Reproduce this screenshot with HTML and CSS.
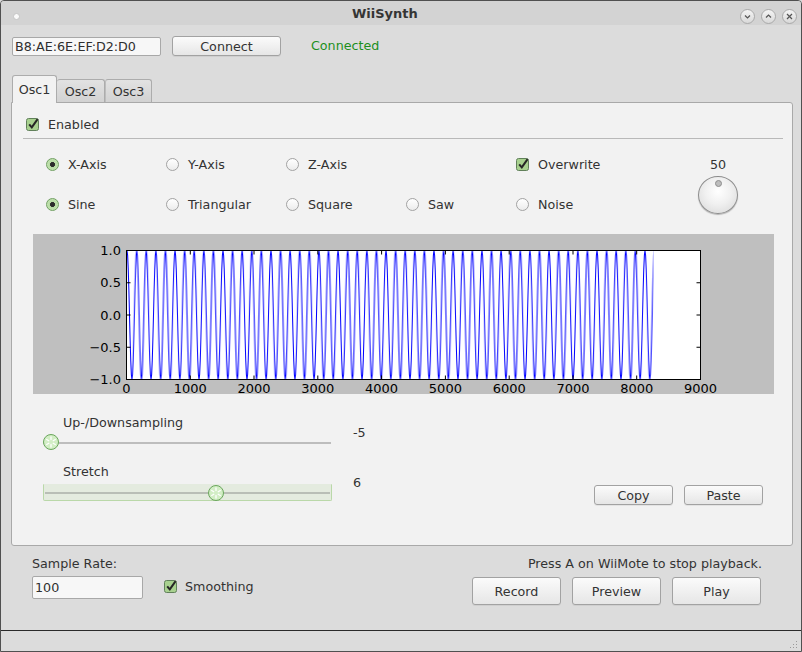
FILE: index.html
```html
<!DOCTYPE html>
<html>
<head>
<meta charset="utf-8">
<title>WiiSynth</title>
<link rel="stylesheet" href="styles.css">
</head>
<body>
<div class="window">
  <div class="titlebar">
    <span class="tb-dot"></span>
    <span class="tb-title">WiiSynth</span>
    <div class="tb-buttons">
      <span class="tb-btn"><svg width="15" height="15" viewBox="0 0 15 15"><polyline points="5,6.5 7.5,9 10,6.5" fill="none" stroke="#555" stroke-width="1.2"/></svg></span>
      <span class="tb-btn"><svg width="15" height="15" viewBox="0 0 15 15"><polyline points="5,8.5 7.5,6 10,8.5" fill="none" stroke="#555" stroke-width="1.2"/></svg></span>
      <span class="tb-btn"><svg width="15" height="15" viewBox="0 0 15 15"><path d="M5 5 L10 10 M10 5 L5 10" fill="none" stroke="#555" stroke-width="1.2"/></svg></span>
    </div>
  </div>

  <div class="main">
    <div class="conn-row">
      <div class="field mac">B8:AE:6E:EF:D2:D0</div>
      <div class="btn connect">Connect</div>
      <div class="status">Connected</div>
    </div>

    <div class="tabs">
      <div class="tab active">Osc1</div>
      <div class="tab osc2">Osc2</div>
      <div class="tab osc3">Osc3</div>
    </div>

    <div class="pane">
      <div class="enabled-row">
        <span class="cb"><svg width="14" height="14" viewBox="0 0 14 14"><rect x="0.5" y="1.5" width="12" height="12" rx="2" fill="#a8d18f" stroke="#61805a"/><path d="M3.2 7.4 L5.8 10.4 L11.6 2.2" fill="none" stroke="#262626" stroke-width="2"/></svg></span>
        <span>Enabled</span>
      </div>
      <div class="sep"></div>

      <div class="options">
        <div class="opt"><span class="radio on"></span>X-Axis</div>
        <div class="opt"><span class="radio"></span>Y-Axis</div>
        <div class="opt"><span class="radio"></span>Z-Axis</div>
        <div class="opt"></div>
        <div class="opt"><span class="cb"><svg width="14" height="14" viewBox="0 0 14 14"><rect x="0.5" y="1.5" width="12" height="12" rx="2" fill="#a8d18f" stroke="#61805a"/><path d="M3.2 7.4 L5.8 10.4 L11.6 2.2" fill="none" stroke="#262626" stroke-width="2"/></svg></span>Overwrite</div>
        <div class="knob-cell">
          <span class="knob-val">50</span>
          <span class="knob"><span class="knob-dot"></span></span>
        </div>
        <div class="opt"><span class="radio on"></span>Sine</div>
        <div class="opt"><span class="radio"></span>Triangular</div>
        <div class="opt"><span class="radio"></span>Square</div>
        <div class="opt"><span class="radio"></span>Saw</div>
        <div class="opt"><span class="radio"></span>Noise</div>
      </div>

      <div class="plot">
        <svg width="741" height="166" viewBox="0 0 741 166">
          <defs>
            <pattern id="wave" patternUnits="userSpaceOnUse" x="89.3" y="0" width="9.59" height="160">
              <polyline fill="none" stroke="#0000ff" stroke-width="1"
                points="-0.599,140.59 0,145.5 0.599,140.59 1.199,126.61 1.798,105.68 2.398,81 2.997,56.32 3.596,35.39 4.196,21.41 4.795,16.5 5.394,21.41 5.994,35.39 6.593,56.32 7.193,81 7.792,105.68 8.391,126.61 8.991,140.59 9.59,145.5 10.19,140.59"/>
            </pattern>
          </defs>
          <rect x="0" y="0" width="741" height="160" fill="#bfbfbf"/>
          <rect x="93.5" y="16.5" width="574" height="129" fill="#ffffff"/>
          <rect x="93.5" y="16" width="527" height="130" fill="url(#wave)"/>
          <g stroke="#000" stroke-width="1">
            <path d="M93.5 16.5 h4 M93.5 48.75 h4 M93.5 81 h4 M93.5 113.25 h4 M93.5 145.5 h4"/>
            <path d="M667.5 16.5 h-4 M667.5 48.75 h-4 M667.5 81 h-4 M667.5 113.25 h-4 M667.5 145.5 h-4"/>
            <path d="M157.3 145.5 v-4 M221 145.5 v-4 M284.8 145.5 v-4 M348.6 145.5 v-4 M412.4 145.5 v-4 M476.2 145.5 v-4 M540 145.5 v-4 M603.7 145.5 v-4"/>
            <path d="M157.3 16.5 v4 M221 16.5 v4 M284.8 16.5 v4 M348.6 16.5 v4 M412.4 16.5 v4 M476.2 16.5 v4 M540 16.5 v4 M603.7 16.5 v4"/>
          </g>
          <rect x="93.5" y="16.5" width="574" height="129" fill="none" stroke="#000" stroke-width="1"/>
          <g class="ax" text-anchor="end">
            <text x="88" y="21">1.0</text>
            <text x="88" y="53">0.5</text>
            <text x="88" y="85.5">0.0</text>
            <text x="88" y="117.5">−0.5</text>
            <text x="88" y="150">−1.0</text>
          </g>
          <g class="ax" text-anchor="middle">
            <text x="93.5" y="159">0</text>
            <text x="157.3" y="159">1000</text>
            <text x="221" y="159">2000</text>
            <text x="284.8" y="159">3000</text>
            <text x="348.6" y="159">4000</text>
            <text x="412.4" y="159">5000</text>
            <text x="476.2" y="159">6000</text>
            <text x="540" y="159">7000</text>
            <text x="603.7" y="159">8000</text>
            <text x="667.5" y="159">9000</text>
          </g>
        </svg>
      </div>

      <div class="controls">
        <div class="sliders">
          <div class="sblock">
            <div class="sstack">
              <div class="slabel">Up-/Downsampling</div>
              <div class="track">
                <span class="groove"></span>
                <span class="handle" style="left:0px"><svg width="16" height="16" viewBox="0 0 16 16"><circle cx="8" cy="8" r="7.5" fill="#d2eec5" stroke="#6aa65c"/><g stroke="#fff" stroke-width="1.3" stroke-linecap="round"><path d="M8 3 V5.5 M8 10.5 V13 M3.7 5.5 L5.8 6.7 M10.2 9.3 L12.3 10.5 M3.7 10.5 L5.8 9.3 M10.2 6.7 L12.3 5.5"/></g></svg></span>
              </div>
            </div>
            <div class="sval">-5</div>
          </div>
          <div class="sblock second">
            <div class="sstack">
              <div class="slabel">Stretch</div>
              <div class="track focus">
                <span class="groove"></span>
                <span class="handle" style="left:164px"><svg width="16" height="16" viewBox="0 0 16 16"><circle cx="8" cy="8" r="7.5" fill="#d2eec5" stroke="#6aa65c"/><g stroke="#fff" stroke-width="1.3" stroke-linecap="round"><path d="M8 3 V5.5 M8 10.5 V13 M3.7 5.5 L5.8 6.7 M10.2 9.3 L12.3 10.5 M3.7 10.5 L5.8 9.3 M10.2 6.7 L12.3 5.5"/></g></svg></span>
              </div>
            </div>
            <div class="sval">6</div>
          </div>
        </div>
        <div class="copy-paste">
          <div class="btn small">Copy</div>
          <div class="btn small">Paste</div>
        </div>
      </div>
    </div>

    <div class="bottom">
      <div class="b-label">Sample Rate:</div>
      <div class="b-hint">Press A on WiiMote to stop playback.</div>
      <div class="b-left">
        <div class="field rate">100</div>
        <span class="cb"><svg width="14" height="14" viewBox="0 0 14 14"><rect x="0.5" y="1.5" width="12" height="12" rx="2" fill="#a8d18f" stroke="#61805a"/><path d="M3.2 7.4 L5.8 10.4 L11.6 2.2" fill="none" stroke="#262626" stroke-width="2"/></svg></span>
        <span>Smoothing</span>
      </div>
      <div class="b-buttons">
        <div class="btn big">Record</div>
        <div class="btn big">Preview</div>
        <div class="btn big">Play</div>
      </div>
    </div>
  </div>

  <div class="statusbar">
    <svg class="grip" width="9" height="9" viewBox="0 0 9 9" fill="#9a9a9a"><rect x="7" y="1" width="1" height="1"/><rect x="4" y="4" width="1" height="1"/><rect x="7" y="4" width="1" height="1"/><rect x="1" y="7" width="1" height="1"/><rect x="4" y="7" width="1" height="1"/><rect x="7" y="7" width="1" height="1"/></svg>
  </div>
</div>
</body>
</html>
```

FILE: styles.css
```css
* { box-sizing: border-box; }

html, body {
  margin: 0;
  padding: 0;
  background: #dcdcdc;
}

body {
  font-family: "DejaVu Sans", sans-serif;
  font-size: 12.7px;
  color: #333333;
}

.window {
  width: 802px;
  height: 652px;
  border: 1px solid #505050;
  border-radius: 4px 4px 0 0;
  background: #dcdcdc;
  display: flex;
  flex-direction: column;
  overflow: hidden;
}

/* title bar */
.titlebar {
  height: 24px;
  flex: none;
  background: #d3d3d3;
  display: flex;
  align-items: center;
}

.tb-dot {
  width: 7px;
  height: 7px;
  border-radius: 50%;
  background: #fafafa;
  border: 1px solid #c4c4c4;
  margin-left: 12px;
  margin-top: 6px;
}

.tb-title {
  font-weight: bold;
  font-size: 13px;
  color: #353535;
  margin-left: 332px;
  padding-top: 2px;
  line-height: 22px;
}

.tb-buttons {
  margin-left: auto;
  margin-right: 4px;
  margin-top: 6px;
  display: flex;
  gap: 6px;
}

.tb-btn {
  width: 15px;
  height: 15px;
  border-radius: 50%;
  border: 1px solid #a9a9a9;
  background: linear-gradient(#f4f4f4, #d9d9d9);
  display: flex;
  align-items: center;
  justify-content: center;
  overflow: hidden;
}

.tb-btn svg { flex: none; margin: -1px; }

/* main */
.main {
  flex: 1;
  padding: 0 8px 0 10px;
  display: flex;
  flex-direction: column;
}

.conn-row {
  margin-top: 11px;
  margin-left: 1px;
  height: 20px;
  display: flex;
  align-items: flex-end;
}

.field {
  background: #f7f7f7;
  border: 1px solid #a8a8a8;
  border-radius: 2px;
  padding-left: 2px;
  color: #2e2e2e;
  display: flex;
  align-items: center;
}

.mac {
  width: 149px;
  height: 19px;
}

.btn {
  border: 1px solid #a2a2a2;
  border-radius: 3px;
  background: linear-gradient(#fbfbfb, #e6e6e6);
  display: flex;
  align-items: center;
  justify-content: center;
  color: #333;
  box-shadow: 0 1px 0 rgba(0,0,0,0.06);
}

.connect {
  width: 109px;
  height: 20px;
  margin-left: 11px;
}

.status {
  margin-left: 30px;
  color: #1d8f1d;
  align-self: center;
  margin-top: -2px;
}

/* tabs */
.tabs {
  margin-top: 19px;
  margin-left: 1px;
  height: 27px;
  display: flex;
  align-items: flex-end;
}

.tab {
  height: 23px;
  border: 1px solid #acacac;
  border-bottom: none;
  border-radius: 3px 3px 0 0;
  background: linear-gradient(#e2e2e2, #d2d2d2);
  display: flex;
  align-items: center;
  justify-content: center;
  padding-top: 1px;
}

.tab.active {
  width: 45px;
  height: 28px;
  margin-bottom: -1px;
  background: #f2f2f2;
  position: relative;
  z-index: 1;
  padding-top: 0;
}

.osc2 { width: 48px; border-left: none; }
.osc3 { width: 47px; border-left: 1px solid #bdbdbd; }

.pane {
  width: 782px;
  height: 444px;
  flex: none;
  border: 1px solid #a9a9a9;
  border-radius: 0 3px 3px 3px;
  background: #f2f2f2;
  display: flex;
  flex-direction: column;
}

.enabled-row {
  margin-top: 14px;
  padding-left: 14px;
  height: 14px;
  display: flex;
  align-items: center;
}

.cb {
  width: 14px;
  height: 14px;
  flex: none;
  margin-right: 8px;
  display: flex;
  margin-top: -1px;
}

.sep {
  margin: 7px 9px 0 11px;
  border-top: 1px solid #b9b9b9;
}

.options {
  margin-top: 15px;
  padding-left: 34px;
  display: grid;
  grid-template-columns: 120px 120px 120px 110px 172px 60px;
  grid-template-rows: 20px 20px;
  row-gap: 20px;
}

.opt {
  display: flex;
  align-items: center;
  height: 20px;
}

.radio {
  width: 13px;
  height: 13px;
  flex: none;
  border-radius: 50%;
  border: 1px solid #a3a3a3;
  background: linear-gradient(#ffffff, #ececec);
  margin-right: 9px;
}

.radio.on {
  border-color: #71a062;
  background: radial-gradient(circle, #2c2c2c 0, #2c2c2c 2.2px, #b7dba3 2.8px, #c9e7b9 100%);
}

.knob-cell {
  grid-column: 6;
  grid-row: 1 / span 2;
  display: flex;
  flex-direction: column;
  align-items: center;
}

.knob-val {
  line-height: 20px;
  height: 20px;
  padding-top: 1px;
}

.knob {
  margin-top: 2px;
  width: 40px;
  height: 40px;
  border-radius: 50%;
  border: 1px solid #8c8c8c;
  background: radial-gradient(circle at 50% 40%, #ffffff 0, #f0f0f0 45%, #d6d6d6 100%);
  box-shadow: 0 1px 1px rgba(0,0,0,0.25);
  position: relative;
}

.knob-dot {
  position: absolute;
  left: 16px;
  top: 3px;
  width: 7px;
  height: 7px;
  border-radius: 50%;
  background: #bdbdbd;
  border: 1px solid #8e8e8e;
}

.plot {
  margin: 20px 0 0 21px;
  width: 741px;
  height: 160px;
  flex: none;
}

.plot svg { display: block; overflow: visible; }

.ax {
  font-family: "DejaVu Sans", sans-serif;
  font-size: 13px;
  fill: #000;
}

/* sliders */
.controls {
  margin-top: 21px;
  padding-left: 31px;
  display: flex;
}

.sliders {
  display: flex;
  flex-direction: column;
  gap: 14px;
}

.sblock {
  display: flex;
  align-items: center;
}

.sstack {
  width: 289px;
  display: flex;
  flex-direction: column;
  gap: 3px;
}

.sblock.second .sstack { gap: 4px; }

.slabel {
  padding-left: 20px;
  line-height: 16px;
  height: 16px;
}

.sval {
  margin-left: 21px;
}

.track {
  height: 16px;
  position: relative;
}

.groove {
  display: block;
  position: absolute;
  left: 0;
  right: 1px;
  top: 8px;
  height: 2px;
  background: #bdbdbd;
}

.track.focus {
  height: 17px;
  background: #e4ebdf;
  border: 1px solid #bad8a9;
  border-top-color: #e4ebdf;
  border-radius: 0 0 2px 2px;
}

.track.focus .groove {
  left: 1px;
  right: 1px;
  top: 7px;
  background: #b9beb6;
}

.handle {
  position: absolute;
  top: 0;
  width: 16px;
  height: 16px;
  display: block;
}

.handle svg { display: block; }

.copy-paste {
  margin-left: auto;
  margin-right: 29px;
  align-self: flex-end;
  margin-bottom: -4px;
  display: flex;
  gap: 11px;
}

.btn.small {
  width: 79px;
  height: 20px;
}

/* bottom area */
.bottom {
  margin-top: 10px;
  padding: 0 31px 0 21px;
  display: grid;
  grid-template-columns: 1fr auto;
  grid-template-rows: 16px auto;
  row-gap: 4px;
}

.b-label, .b-hint {
  line-height: 16px;
}

.b-hint { text-align: right; }

.b-left {
  display: flex;
  align-items: center;
  height: 23px;
}

.rate {
  width: 111px;
  height: 23px;
  margin-right: 21px;
}

.b-left .cb { margin-right: 7px; margin-top: -3px; }
.b-left .cb + span { margin-top: -2px; }

.b-buttons {
  display: flex;
  gap: 11px;
  margin-top: 1px;
  margin-right: 1px;
}

.btn.big {
  width: 89px;
  height: 28px;
}

/* status bar */
.statusbar {
  height: 21px;
  flex: none;
  border-top: 1px solid #2a2a2a;
  display: flex;
  justify-content: flex-end;
  align-items: flex-end;
  padding: 0 3px 2px 0;
}
```
